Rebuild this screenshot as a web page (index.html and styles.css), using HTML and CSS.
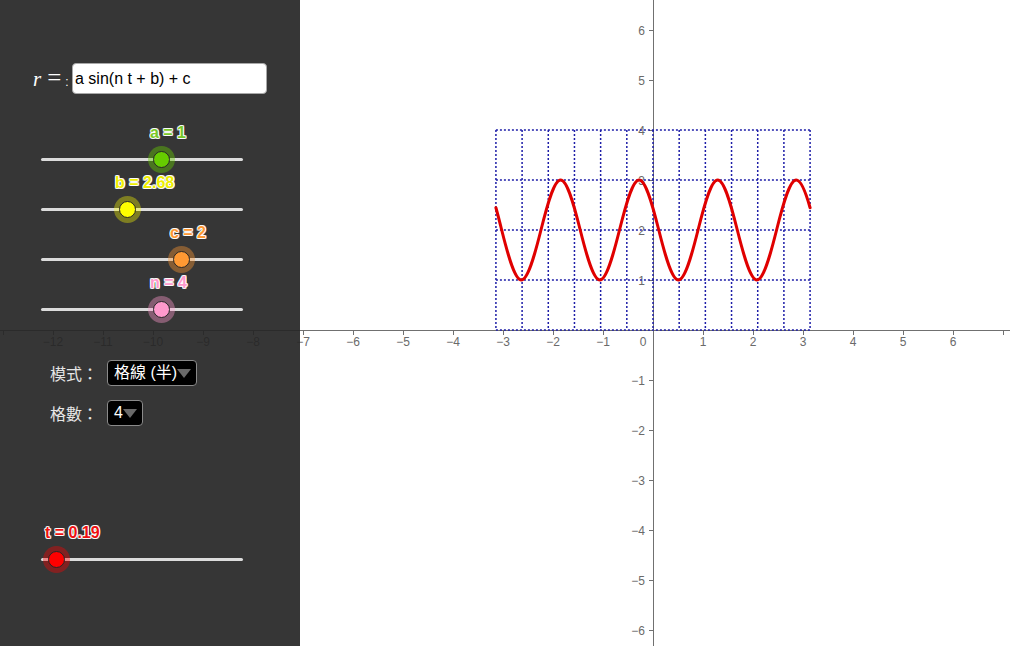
FILE: index.html
```html
<!DOCTYPE html>
<html lang="zh-Hant">
<head>
<meta charset="utf-8">
<title>r = a sin(n t + b) + c</title>
<link rel="stylesheet" href="styles.css">
</head>
<body>
<div class="applet">
  <svg class="graph" viewBox="0 0 1013 646" width="1013" height="646">
    <g class="axes">
      <line x1="0" y1="330.5" x2="1010" y2="330.5"/>
      <line x1="653.5" y1="0" x2="653.5" y2="646"/>
      <path d="M3.5 331v4M53.5 331v4M103.5 331v4M153.5 331v4M203.5 331v4M253.5 331v4M303.5 331v4M353.5 331v4M403.5 331v4M453.5 331v4M503.5 331v4M553.5 331v4M603.5 331v4M703.5 331v4M753.5 331v4M803.5 331v4M853.5 331v4M903.5 331v4M953.5 331v4M1003.5 331v4"/>
      <path d="M649 30.5h4M649 80.5h4M649 130.5h4M649 180.5h4M649 230.5h4M649 280.5h4M649 380.5h4M649 430.5h4M649 480.5h4M649 530.5h4M649 580.5h4M649 630.5h4"/>
    </g>
    <g class="xlabels">
      <text x="53" y="346">−12</text>
      <text x="103" y="346">−11</text>
      <text x="153" y="346">−10</text>
      <text x="203" y="346">−9</text>
      <text x="253" y="346">−8</text>
      <text x="303" y="346">−7</text>
      <text x="353" y="346">−6</text>
      <text x="403" y="346">−5</text>
      <text x="453" y="346">−4</text>
      <text x="503" y="346">−3</text>
      <text x="553" y="346">−2</text>
      <text x="603" y="346">−1</text>
      <text x="643" y="346">0</text>
      <text x="703" y="346">1</text>
      <text x="753" y="346">2</text>
      <text x="803" y="346">3</text>
      <text x="853" y="346">4</text>
      <text x="903" y="346">5</text>
      <text x="953" y="346">6</text>
    </g>
    <g class="ylabels">
      <text x="645" y="34.5">6</text>
      <text x="645" y="84.5">5</text>
      <text x="645" y="134.5">4</text>
      <text x="645" y="184.5">3</text>
      <text x="645" y="234.5">2</text>
      <text x="645" y="284.5">1</text>
      <text x="645" y="384.5">−1</text>
      <text x="645" y="434.5">−2</text>
      <text x="645" y="484.5">−3</text>
      <text x="645" y="534.5">−4</text>
      <text x="645" y="584.5">−5</text>
      <text x="645" y="634.5">−6</text>
    </g>
    <g class="grid">
      <line x1="495.92" y1="130" x2="810.08" y2="130"/>
      <line x1="495.92" y1="180" x2="810.08" y2="180"/>
      <line x1="495.92" y1="230" x2="810.08" y2="230"/>
      <line x1="495.92" y1="280" x2="810.08" y2="280"/>
      <line x1="495.92" y1="330" x2="810.08" y2="330"/>
      <line x1="495.92" y1="130" x2="495.92" y2="330"/>
      <line x1="522.10" y1="130" x2="522.10" y2="330"/>
      <line x1="548.28" y1="130" x2="548.28" y2="330"/>
      <line x1="574.46" y1="130" x2="574.46" y2="330"/>
      <line x1="600.64" y1="130" x2="600.64" y2="330"/>
      <line x1="626.82" y1="130" x2="626.82" y2="330"/>
      <line x1="653" y1="130" x2="653" y2="330"/>
      <line x1="679.18" y1="130" x2="679.18" y2="330"/>
      <line x1="705.36" y1="130" x2="705.36" y2="330"/>
      <line x1="731.54" y1="130" x2="731.54" y2="330"/>
      <line x1="757.72" y1="130" x2="757.72" y2="330"/>
      <line x1="783.90" y1="130" x2="783.90" y2="330"/>
      <line x1="810.08" y1="130" x2="810.08" y2="330"/>
    </g>
    <path class="curve" d="M495.92 207.76 C497.84 214.65 499.77 222.31 501.69 230 C508.235 256.18 514.78 280 521.325 280 C527.87 280 534.415 256.18 540.96 230 C547.505 203.82 554.05 180 560.595 180 C567.14 180 573.685 203.82 580.23 230 C586.775 256.18 593.32 280 599.865 280 C606.41 280 612.955 256.18 619.5 230 C626.045 203.82 632.59 180 639.135 180 C645.68 180 652.225 203.82 658.77 230 C665.315 256.18 671.86 280 678.405 280 C684.95 280 691.495 256.18 698.04 230 C704.585 203.82 711.13 180 717.675 180 C724.22 180 730.765 203.82 737.31 230 C743.855 256.18 750.4 280 756.945 280 C763.49 280 770.035 256.18 776.58 230 C783.125 203.82 789.67 180 796.215 180 C800.835 180 805.46 191.21 810.08 207.76"/>
  </svg>

  <aside class="panel">
    <div class="formula">
      <span class="lhs"><i class="var">r</i><span class="eq">=</span><span class="colon">:</span></span>
      <div class="input">a sin(n t + b) + c</div>
    </div>

    <div class="sliders">
      <div class="slider s-a">
        <div class="track">
          <div class="knob" style="left:59.9%">
            <span class="halo"></span><span class="dot"></span>
            <span class="label">a = 1</span>
          </div>
        </div>
      </div>
      <div class="slider s-b">
        <div class="track">
          <div class="knob" style="left:42.6%">
            <span class="halo"></span><span class="dot"></span>
            <span class="label">b = 2.68</span>
          </div>
        </div>
      </div>
      <div class="slider s-c">
        <div class="track">
          <div class="knob" style="left:69.8%">
            <span class="halo"></span><span class="dot"></span>
            <span class="label">c = 2</span>
          </div>
        </div>
      </div>
      <div class="slider s-n">
        <div class="track">
          <div class="knob" style="left:59.9%">
            <span class="halo"></span><span class="dot"></span>
            <span class="label">n = 4</span>
          </div>
        </div>
      </div>
    </div>

    <div class="menus">
      <div class="menu-row">
        <span class="menu-label">模式：</span>
        <div class="select"><span>格線 (半)</span><svg class="caret" viewBox="0 0 14 9" width="14" height="9"><polygon points="0,0 14,0 7,9"/></svg></div>
      </div>
      <div class="menu-row">
        <span class="menu-label">格數：</span>
        <div class="select"><span>4</span><svg class="caret" viewBox="0 0 14 9" width="14" height="9"><polygon points="0,0 14,0 7,9"/></svg></div>
      </div>
    </div>

    <div class="slider s-t">
      <div class="track">
        <div class="knob" style="left:7.9%">
          <span class="halo"></span><span class="dot"></span>
          <span class="label">t = 0.19</span>
        </div>
      </div>
    </div>
  </aside>
</div>
</body>
</html>
```

FILE: styles.css
```css
html, body {
  margin: 0;
  padding: 0;
  background: #ffffff;
}

.applet {
  position: relative;
  width: 1013px;
  height: 646px;
  overflow: hidden;
  font-family: "Liberation Sans", Arial, sans-serif;
  isolation: isolate;
}

/* ---------- graph canvas ---------- */
.graph {
  position: absolute;
  left: 0;
  top: 0;
  z-index: 0;
  display: block;
}

.axes line,
.axes path {
  stroke: #707070;
  stroke-width: 1;
  fill: none;
}

.xlabels text,
.ylabels text {
  font-family: "Liberation Sans", Arial, sans-serif;
  font-size: 12px;
  fill: #6a6a6a;
}

.xlabels text {
  text-anchor: middle;
}

.ylabels text {
  text-anchor: end;
}

.grid line {
  stroke: #1e1ea8;
  stroke-width: 1.5;
  stroke-dasharray: 2 2;
}

.curve {
  fill: none;
  stroke: #e00000;
  stroke-width: 3;
  stroke-linecap: round;
  stroke-linejoin: round;
}

/* ---------- side panel ---------- */
.panel {
  position: absolute;
  left: 0;
  top: 0;
  z-index: 1;
  width: 300px;
  height: 646px;
  box-sizing: border-box;
  padding-top: 63px;
  background: rgba(37, 37, 37, 0.92);
  display: flex;
  flex-direction: column;
}

.formula {
  display: flex;
  align-items: center;
  height: 31px;
  padding-left: 33px;
}

.lhs {
  width: 39px;
  display: flex;
  align-items: baseline;
  color: #ffffff;
  font-family: "Liberation Serif", "Times New Roman", serif;
}

.var {
  font-size: 21px;
  font-style: italic;
}

.eq {
  font-size: 25px;
  margin-left: 6px;
  line-height: 1;
}

.colon {
  font-family: "Liberation Sans", Arial, sans-serif;
  font-size: 12px;
  margin-left: 4px;
}

.input {
  width: 195px;
  height: 31px;
  box-sizing: border-box;
  background: #ffffff;
  border: 1px solid #a8a8a8;
  border-radius: 4px;
  padding-left: 2px;
  font-size: 16px;
  line-height: 29px;
  color: #000000;
  white-space: nowrap;
}

.sliders {
  margin-top: 40px;
  display: flex;
  flex-direction: column;
}

.slider {
  height: 50px;
  display: flex;
  align-items: center;
  padding-left: 41px;
}

.track {
  position: relative;
  width: 202px;
  height: 3px;
  background: #dcdcdc;
  border-radius: 1.5px;
}

.knob {
  position: absolute;
  top: 1.5px;
  width: 0;
  height: 0;
}

.halo {
  position: absolute;
  left: -13.5px;
  top: -13.5px;
  width: 27px;
  height: 27px;
  border-radius: 50%;
  background: var(--halo);
}

.dot {
  position: absolute;
  left: -8.5px;
  top: -8.5px;
  width: 17px;
  height: 17px;
  box-sizing: border-box;
  border-radius: 50%;
  border: 1px solid #262626;
  background: var(--fill);
}

.label {
  position: absolute;
  left: -12px;
  top: -35px;
  white-space: nowrap;
  font-family: "Liberation Sans", Arial, sans-serif;
  font-weight: bold;
  font-size: 16px;
  line-height: 18px;
  color: var(--text);
  text-shadow:
    1px 0 0 rgba(255, 255, 255, 0.9),
    -1px 0 0 rgba(255, 255, 255, 0.9),
    0 1px 0 rgba(255, 255, 255, 0.9),
    0 -1px 0 rgba(255, 255, 255, 0.9),
    1px 1px 0 rgba(255, 255, 255, 0.7),
    -1px -1px 0 rgba(255, 255, 255, 0.7),
    1px -1px 0 rgba(255, 255, 255, 0.7),
    -1px 1px 0 rgba(255, 255, 255, 0.7);
}

.s-a { --fill: #66cc00; --halo: rgba(102, 204, 0, 0.42); --text: #78c828; }
.s-b { --fill: #ffff00; --halo: rgba(255, 255, 0, 0.36); --text: #eeee00; }
.s-c { --fill: #ff9933; --halo: rgba(255, 153, 51, 0.4); --text: #ff9933; }
.s-n { --fill: #ff99cc; --halo: rgba(255, 153, 204, 0.4); --text: #ff99cc; }
.s-t { --fill: #ff0000; --halo: rgba(255, 0, 0, 0.38); --text: #ee1111; }

.menus {
  margin-top: 26px;
  display: flex;
  flex-direction: column;
  gap: 14px;
}

.menu-row {
  display: flex;
  align-items: center;
  height: 26px;
  padding-left: 50px;
}

.menu-label {
  width: 57px;
  font-family: "Noto Sans CJK TC", "Noto Sans CJK SC", sans-serif;
  font-size: 16px;
  line-height: 20px;
  color: #e6e6e6;
}

.select {
  height: 26px;
  box-sizing: border-box;
  display: flex;
  align-items: center;
  padding: 0 5px 0 6px;
  background: #000000;
  border: 1px solid #8a8a8a;
  border-radius: 4px;
  color: #ffffff;
  font-family: "Liberation Sans", "Noto Sans CJK TC", sans-serif;
  font-size: 16px;
  line-height: 20px;
  white-space: nowrap;
}

.caret {
  display: block;
  margin-top: 1px;
}

.caret polygon {
  fill: #6a6a6a;
}

.s-t {
  margin-top: 108px;
}
```
